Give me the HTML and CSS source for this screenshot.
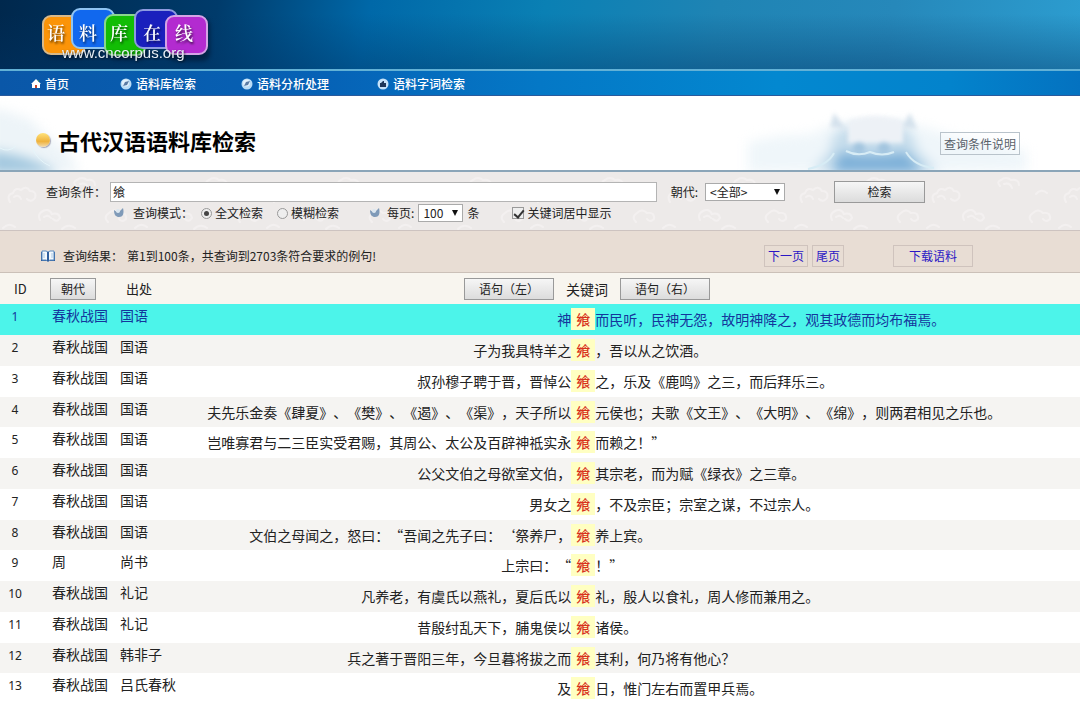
FILE: index.html
```html
<!DOCTYPE html>
<html lang="zh-CN">
<head>
<meta charset="utf-8">
<meta name="viewport" content="width=device-width, initial-scale=1">
<title>古代汉语语料库检索</title>
<link rel="stylesheet" href="styles.css">
</head>
<body>
<header class="banner">
  <svg class="logo" width="170" height="58" viewBox="0 0 170 58" role="img" aria-label="语料库在线">
    <g class="tile-shadow">
      <rect x="5" y="13" width="42" height="39" rx="8"/>
      <rect x="68" y="12" width="40" height="42" rx="8"/>
      <rect x="128" y="12" width="42" height="43" rx="8"/>
    </g>
    <g stroke-width="2">
      <rect x="3" y="10" width="42" height="38" rx="8" fill="#fb9408" stroke="#d8b98a"/>
      <rect x="32" y="3" width="42" height="39" rx="8" fill="#1168ee" stroke="#8fc4f2"/>
      <rect x="65" y="9" width="40" height="40" rx="8" fill="#12bd05" stroke="#8ad68c"/>
      <rect x="95" y="4" width="42" height="38" rx="8" fill="#1a20bd" stroke="#8d9ae0"/>
      <rect x="126" y="10" width="41" height="38" rx="8" fill="#b32bd0" stroke="#d5a3e6"/>
    </g>
    <g class="logo-chars">
      <text x="7" y="34">语</text>
      <text x="39" y="34">料</text>
      <text x="70" y="34">库</text>
      <text x="103" y="34">在</text>
      <text x="135" y="34">线</text>
    </g>
    <text class="logo-url" x="22" y="52">www.cncorpus.org</text>
  </svg>
</header>

<nav class="nav">
  <a class="nav-home" href="#">
    <svg width="10" height="10" viewBox="0 0 10 10"><path d="M5 0 10 5H9v4H6V6H4v3H1V5H0z" fill="#fff"/><path d="M7 1h1v2L7 2z" fill="#3a8f4c"/><path d="M4 6h2v3H4z" fill="#c2452e"/></svg>首页</a>
  <a class="nav-search" href="#">
    <svg width="12" height="12" viewBox="0 0 12 12"><circle cx="6" cy="6" r="5.500" fill="#b9dcf6"/><circle cx="5.500" cy="5" r="3.500" fill="#e4f2fc"/><path d="M3 8l2-4 4-1-2 4z" fill="#5a7ba4"/></svg>语料库检索</a>
  <a class="nav-analyse" href="#">
    <svg width="12" height="12" viewBox="0 0 12 12"><circle cx="6" cy="6" r="5.500" fill="#b9dcf6"/><circle cx="5.500" cy="5" r="3.500" fill="#e4f2fc"/><path d="M3 8l2-4 4-1-2 4z" fill="#5a7ba4"/></svg>语料分析处理</a>
  <a class="nav-words" href="#">
    <svg width="12" height="12" viewBox="0 0 12 12"><circle cx="6" cy="6" r="5.500" fill="#c5e2f8"/><path d="M3 5h1l2-2h1v2h2v4H3z" fill="#1d3658"/></svg>语料字词检索</a>
</nav>

<section class="title-bar">
  <svg class="scene scene-left" width="130" height="74" viewBox="0 0 130 74" aria-hidden="true">
    <g class="soft">
      <path d="M-10 12c18 2 30 8 42 12 12 20 32 20 48 52H-10z" fill="#edf4f8"/>
      <path d="M-10 54c18 4 45 6 68 24H-10z" fill="#a3c8df"/>
    </g>
    <path d="M0 52q8 5 16-2M32 52q6 13 18 18" fill="none" stroke="#e6f5fa" stroke-width="1"/>
  </svg>
  <svg class="scene scene-right" width="340" height="74" viewBox="0 0 340 74" aria-hidden="true">
    <g class="soft">
      <path d="M20 76V46l30-6 34-2 16-8 12 3 13-3 52-2 20 3 24 8 30 6 48 10v20z" fill="#eff6fa"/>
      <path d="M84 76l18-22 4-17 10-7h60l9 10 4 14 22 22z" fill="#c6ddec"/>
      <path d="M104 78l8-22 16 3 30 0 20-3 18 22z" fill="#7db0d8"/>
    </g>
    <g class="faint">
      <path d="M106 17l-4 14 16 2zM182 17l-8 14 15 2z" fill="#d4e1ec"/>
      <path d="M120 25q27-10 55 0v22h-55z" fill="#edf1f6"/>
      <circle cx="131" cy="52" r="6" fill="#a3c5df"/>
      <circle cx="156" cy="52" r="6" fill="#a3c5df"/>
    </g>
    <path d="M80 73q20-4 26-16M118 55q12 6 24 1 12 5 24 0M178 56q8 14 28 16" fill="none" stroke="#d7ecf5" stroke-width="2"/>
  </svg>
  <h1 class="title"><span class="bullet"></span>古代汉语语料库检索</h1>
  <a class="help-link" href="#">查询条件说明</a>
</section>

<form class="search">
  <svg class="pattern" width="100%" height="100%" aria-hidden="true">
    <defs>
      <pattern id="clouds" width="132" height="58" patternUnits="userSpaceOnUse">
        <g fill="none" stroke="#f8f5f5" stroke-width="2" stroke-linecap="round">
          <path d="M10 30q-4-7 3-9 2-6 8-3 5-5 9 1 7 0 5 7-4 5-8 1M14 25q5-3 7 2M76 14q-4-4 1-6 5-4 10 0 8-1 8 5M80 12q6-2 8 4M40 48q-3-6 3-9 6-3 9 3 7-2 8 4-3 5-7 1M44 45q4-3 7 1M108 50q-5-5 1-9 5-5 10 0 8-1 7 6-4 4-7 0M3 56q6-6 12-1M62 57q6-6 13-1M112 22q5-6 11-1"/>
        </g>
      </pattern>
    </defs>
    <rect width="100%" height="100%" fill="url(#clouds)"/>
  </svg>
  <div class="search-main">
    <label class="query-label" for="query">查询条件：</label>
    <input class="query" id="query" type="text" value="飨">
    <label class="dynasty-label" for="dynasty">朝代:</label>
    <span class="select-box dynasty"><select id="dynasty"><option>&lt;全部&gt;</option></select></span>
    <button class="btn submit" type="button">检索</button>
  </div>
  <div class="search-options">
    <svg class="drop" width="10" height="10" viewBox="0 0 10 10"><path d="M0 2c2 1 3 3 5 2L9 0c1 4 1 9-4 9C2 9 0 7 0 2z" fill="#7f9ab8"/><circle cx="4" cy="3" r="2" fill="#dbe7f0"/></svg>
    <span class="mode-label">查询模式：</span>
    <label class="choice"><input type="radio" name="mode" checked>全文检索</label>
    <label class="choice"><input type="radio" name="mode">模糊检索</label>
    <svg class="drop drop-page" width="10" height="10" viewBox="0 0 10 10"><path d="M0 2c2 1 3 3 5 2L9 0c1 4 1 9-4 9C2 9 0 7 0 2z" fill="#7f9ab8"/><circle cx="4" cy="3" r="2" fill="#dbe7f0"/></svg>
    <label class="page-label" for="page-size">每页:</label>
    <span class="select-box page-size"><select id="page-size"><option>100</option></select></span>
    <span class="unit">条</span>
    <label class="choice centre-choice"><input type="checkbox" checked>关键词居中显示</label>
  </div>
</form>

<section class="summary">
  <svg class="book" width="14" height="12" viewBox="0 0 14 12"><path d="M0 2h1v8h5l1 1 1-1h5V2h1v9H8l-1 1-1-1H0z" fill="#2e5e9e"/><path d="M1 1h4l2 1 2-1h4v9H9l-2 1-2-1H1z" fill="#f4f9fd" stroke="#5b8bc0"/><path d="M7 2v9" stroke="#2e5e9e" stroke-width="2"/><path d="M3 3v5M11 3v5" stroke="#a9c8e4"/></svg>
  <p class="summary-text"><span>查询结果：</span><span>第1到100条，共查询到2703条符合要求的例句!</span></p>
  <a class="page-link" href="#">下一页</a>
  <a class="page-link" href="#">尾页</a>
  <a class="page-link download" href="#">下载语料</a>
</section>

<table class="results">
  <colgroup>
    <col class="col-id"><col class="col-dynasty"><col class="col-source"><col class="col-left"><col class="col-key"><col>
  </colgroup>
  <thead>
    <tr>
      <th class="id-head">ID</th>
      <th><button class="btn dynasty-sort" type="button">朝代</button></th>
      <th class="source-head">出处</th>
      <th colspan="3">
        <div class="sentence-head">
          <button class="btn side" type="button">语句（左）</button>
          <span>关键词</span>
          <button class="btn side" type="button">语句（右）</button>
        </div>
      </th>
    </tr>
  </thead>
  <tbody>
    <tr class="current"><td class="id">1</td><td>春秋战国</td><td>国语</td><td class="left">神</td><td class="key"><mark>飨</mark></td><td class="right">而民听，民神无怨，故明神降之，观其政德而均布福焉。</td></tr>
    <tr><td class="id">2</td><td>春秋战国</td><td>国语</td><td class="left">子为我具特羊之</td><td class="key"><mark>飨</mark></td><td class="right">，吾以从之饮酒。</td></tr>
    <tr><td class="id">3</td><td>春秋战国</td><td>国语</td><td class="left">叔孙穆子聘于晋，晋悼公</td><td class="key"><mark>飨</mark></td><td class="right">之，乐及《鹿鸣》之三，而后拜乐三。</td></tr>
    <tr><td class="id">4</td><td>春秋战国</td><td>国语</td><td class="left">夫先乐金奏《肆夏》、《樊》、《遏》、《渠》，天子所以</td><td class="key"><mark>飨</mark></td><td class="right">元侯也；夫歌《文王》、《大明》、《绵》，则两君相见之乐也。</td></tr>
    <tr><td class="id">5</td><td>春秋战国</td><td>国语</td><td class="left">岂唯寡君与二三臣实受君赐，其周公、太公及百辟神祗实永</td><td class="key"><mark>飨</mark></td><td class="right">而赖之！”</td></tr>
    <tr><td class="id">6</td><td>春秋战国</td><td>国语</td><td class="left">公父文伯之母欲室文伯，</td><td class="key"><mark>飨</mark></td><td class="right">其宗老，而为赋《绿衣》之三章。</td></tr>
    <tr><td class="id">7</td><td>春秋战国</td><td>国语</td><td class="left">男女之</td><td class="key"><mark>飨</mark></td><td class="right">，不及宗臣；宗室之谋，不过宗人。</td></tr>
    <tr><td class="id">8</td><td>春秋战国</td><td>国语</td><td class="left">文伯之母闻之，怒曰：“吾闻之先子曰：‘祭养尸，</td><td class="key"><mark>飨</mark></td><td class="right">养上宾。</td></tr>
    <tr><td class="id">9</td><td>周</td><td>尚书</td><td class="left">上宗曰：“</td><td class="key"><mark>飨</mark></td><td class="right">！”</td></tr>
    <tr><td class="id">10</td><td>春秋战国</td><td>礼记</td><td class="left">凡养老，有虞氏以燕礼，夏后氏以</td><td class="key"><mark>飨</mark></td><td class="right">礼，殷人以食礼，周人修而兼用之。</td></tr>
    <tr><td class="id">11</td><td>春秋战国</td><td>礼记</td><td class="left">昔殷纣乱天下，脯鬼侯以</td><td class="key"><mark>飨</mark></td><td class="right">诸侯。</td></tr>
    <tr><td class="id">12</td><td>春秋战国</td><td>韩非子</td><td class="left">兵之著于晋阳三年，今旦暮将拔之而</td><td class="key"><mark>飨</mark></td><td class="right">其利，何乃将有他心？</td></tr>
    <tr><td class="id">13</td><td>春秋战国</td><td>吕氏春秋</td><td class="left">及</td><td class="key"><mark>飨</mark></td><td class="right">日，惟门左右而置甲兵焉。</td></tr>
  </tbody>
</table>
</body>
</html>
```
FILE: styles.css
```css
* { box-sizing: border-box; }

body {
  margin: 0;
  overflow-x: hidden;
  background: #fff;
  color: #222;
  font: 12px/18px "Noto Sans CJK SC", sans-serif;
  text-spacing-trim: space-all;
}

a { text-decoration: none; }
svg { flex: none; }

input, select, button { font: inherit; color: inherit; }

/* Banner and navigation */
.banner {
  padding: 6px 0 5px 40px;
  border-bottom: 2px solid #62b1d6;
  background:
    linear-gradient(to bottom, rgba(0, 40, 90, 0) 20%, rgba(0, 50, 100, 0.4)),
    linear-gradient(100deg, #00284d 0%, #003b6b 20%, #0068a8 34%, #0a80b4 50%, #1f84b4 66%, #2688ba 82%, #2c9dd0 100%);
}

.logo { display: block; overflow: visible; }
.tile-shadow { fill: #001a38; filter: blur(2px); opacity: 0.7; }

.logo-chars {
  fill: #fff;
  font: 600 18px "Noto Serif CJK SC", "Noto Sans CJK SC", serif;
  filter: drop-shadow(1px 2px 1px rgba(0, 0, 0, 0.6));
}

.logo-url {
  fill: #e8f0f6;
  font: 15px "Liberation Sans", sans-serif;
  filter: drop-shadow(1px 1px 1px rgba(0, 0, 0, 0.6));
}

.nav {
  display: flex;
  align-items: center;
  height: 25px;
  padding: 2px 0 0 31px;
  border-bottom: 1px solid #2a5a9c;
  background: linear-gradient(to right, #0a57a8, #0662b6 30%, #0478c6 50%, #0388d0 72%, #0383cc 88%, #0472c0);
}

.nav a {
  display: flex;
  align-items: center;
  gap: 4px;
  color: #fff;
  font-weight: 500;
}

.nav-search { margin-left: 51px; }
.nav-analyse { margin-left: 45px; }
.nav-words { margin-left: 48px; }

/* Page title */
.title-bar {
  position: relative;
  display: flex;
  align-items: center;
  justify-content: space-between;
  height: 76px;
  padding: 14px 60px 0 36px;
  border-bottom: 2px solid #8ba5b8;
}

.scene { position: absolute; bottom: 0; overflow: hidden; }
.scene-left { left: 0; }
.scene-right { right: 12px; }
.soft { filter: blur(6px); }
.faint { filter: blur(2px); }

.title {
  position: relative;
  display: flex;
  align-items: center;
  gap: 8px;
  margin: 0;
  color: #000;
  font-size: 22px;
  line-height: 32px;
}

.bullet {
  width: 14px;
  height: 14px;
  border-radius: 50%;
  background: linear-gradient(#ffe27a, #efb23c 60%, #f3dcae);
  box-shadow: 1px 1px 1px #a5a5b4;
}

.help-link {
  position: relative;
  margin-top: 6px;
  padding: 1px 3px;
  border: 1px solid #b9c3cb;
  color: #59616a;
  line-height: 19px;
}

/* Search form */
.search {
  position: relative;
  padding: 8px 0 7px;
  border-bottom: 1px solid #cdc3c0;
  background: #edeae9;
}

.pattern { position: absolute; inset: 0; opacity: 0.6; }

.search-main,
.search-options {
  position: relative;
  display: flex;
  align-items: center;
}

.search-main { height: 23px; padding: 0 155px 0 46px; }
.search-options { height: 20px; padding-left: 114px; }

.query-label { width: 64px; }

.query {
  flex: 1;
  min-width: 80px;
  height: 20px;
  padding: 0 2px;
  border: 1px solid #b4b4b4;
  background: #fff;
}

.dynasty-label { margin-left: 14px; }

.select-box { position: relative; }

.select-box select {
  width: 100%;
  height: 18px;
  padding: 0 4px;
  border: 1px solid #aaa;
  border-radius: 0;
  background: #fff;
  line-height: 16px;
  appearance: none;
}

.select-box::after {
  content: "";
  position: absolute;
  top: 6px;
  right: 5px;
  border: 3px solid transparent;
  border-top: 6px solid #111;
  border-bottom: 0;
  pointer-events: none;
}

.dynasty { width: 80px; margin-left: 7px; }
.page-size { width: 45px; margin-left: 4px; }

.btn {
  padding: 0;
  border: 1px solid #999;
  background: linear-gradient(#f6f6f6, #dcdcdc);
  line-height: 18px;
  height: 22px;
}

.submit { width: 91px; margin-left: 49px; }

.mode-label { width: 68px; margin-left: 9px; }

.choice { display: flex; align-items: center; gap: 3px; margin-right: 14px; }

.choice input {
  position: relative;
  width: 12px;
  height: 12px;
  margin: 0;
  border: 1px solid #999;
  background: #eee;
  appearance: none;
}

.choice input[type="radio"] { width: 11px; height: 11px; border-radius: 50%; }

.choice input[type="radio"]:checked::after {
  content: "";
  position: absolute;
  inset: 2px;
  border-radius: 50%;
  background: #444;
}

.choice input[type="checkbox"]:checked::after {
  content: "";
  position: absolute;
  top: 0;
  left: 3px;
  width: 4px;
  height: 8px;
  border: solid #333;
  border-width: 0 2px 2px 0;
  transform: rotate(40deg);
}

.drop-page { margin-left: 17px; }
.page-label { margin-left: 7px; }
.unit { margin-left: 4px; }
.centre-choice { margin-left: 33px; }

/* Result summary */
.summary {
  display: flex;
  align-items: center;
  height: 42px;
  padding: 9px 107px 0 41px;
  border-bottom: 1px solid #cbc0b8;
  background: #e8ddd4;
}

.summary-text { display: flex; flex: 1; gap: 4px; margin: 0 0 0 8px; }

.page-link {
  margin-left: 4px;
  padding: 0 3px;
  border: 1px solid #cfc3bd;
  color: #2a17c4;
  line-height: 20px;
}

.download { width: 80px; margin-left: 49px; text-align: center; }

/* Results */
.results {
  width: 100%;
  border-collapse: collapse;
  table-layout: fixed;
  font-size: 14px;
}

.col-id { width: 44px; }
.col-dynasty { width: 68px; }
.col-source { width: 92px; }
.col-left { width: 34%; }
.col-key { width: 24px; }

.results th {
  height: 31px;
  padding: 0;
  background: #f8f5ef;
  font-weight: 400;
  text-align: left;
}

.results .id-head { padding-left: 14px; font-size: 13px; }
.results .source-head { padding-left: 14px; font-size: 13px; }

.btn.dynasty-sort { width: 46px; margin-left: 6px; }

.results .btn { display: block; font-size: 12px; }
.sentence-head { display: flex; align-items: center; gap: 12px; padding-left: 260px; }
.side { width: 90px; }

.results td {
  height: 31px;
  padding: 1px 0 0 8px;
  line-height: 20px;
  vertical-align: top;
  white-space: nowrap;
}

.results tbody tr:nth-child(4n) td { height: 30px; }
.results tbody tr:nth-child(even) { background: #f5f4f2; }
.results .current { background: #4cf4ea; color: #14369c; }

.results .id {
  padding: 3px 14px 0 0;
  font-family: "Noto Sans", sans-serif;
  font-size: 12px;
  text-align: center;
}

.results .left { padding: 5px 0 0; text-align: right; }
.results .right { padding: 5px 0 0; }
.results .key { padding: 4px 0 0; text-align: center; }

.results mark {
  display: block;
  background: #ffffc2;
  color: #d8321c;
  font-weight: 500;
  line-height: 22px;
}
```
